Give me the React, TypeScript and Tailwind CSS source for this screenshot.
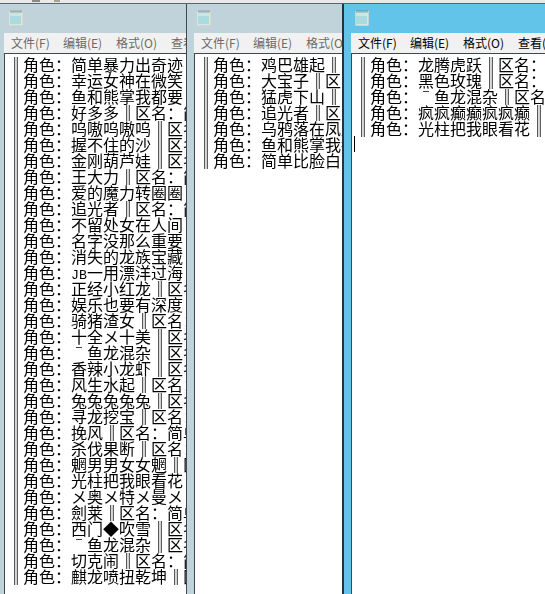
import React from 'react'

const leftRows = [
  '简单暴力出奇迹‖区名：',
  '幸运女神在微笑‖区名：',
  '鱼和熊掌我都要‖区名：',
  '好多多‖区名：简单',
  '呜嗷呜嗷呜‖区名：',
  '握不住的沙‖区名：',
  '金刚葫芦娃‖区名：',
  '王大力‖区名：简单',
  '爱的魔力转圈圈‖区名：',
  '追光者‖区名：简单',
  '不留处女在人间‖区名：',
  '名字没那么重要‖区名：',
  '消失的龙族宝藏‖区名：',
  '@JB一用漂洋过海‖区名：',
  '正经小红龙‖区名：',
  '娱乐也要有深度‖区名：',
  '骑猪渣女‖区名：简单',
  '十全メ十美‖区名：',
  '#鱼龙混杂‖区名：',
  '香辣小龙虾‖区名：',
  '风生水起‖区名：简单',
  '兔兔兔兔兔‖区名：',
  '寻龙挖宝‖区名：简单',
  '挽风‖区名：简单比脸白',
  '杀伐果断‖区名：简单',
  '魍男男女女魍‖区名：',
  '光柱把我眼看花‖区名：',
  'メ奥メ特メ曼メ‖区名：',
  '劍莱‖区名：简单比脸白',
  '西门◆吹雪‖区名：',
  '#鱼龙混杂‖区名：',
  '切克闹‖区名：简单',
  '麒龙喷扭乾坤‖区名：',
]

const midRows = [
  '鸡巴雄起‖区名：简单',
  '大宝子‖区名：简单',
  '猛虎下山‖区名：简单',
  '追光者‖区名：简单',
  '乌鸦落在凤凰‖区名：',
  '鱼和熊掌我都要‖区名：',
  '简单比脸白‖区名：',
]

const rightRows = [
  '龙腾虎跃‖区名：简单比脸白',
  '黑色玫瑰‖区名：简单比脸白',
  '#鱼龙混杂‖区名：简单比脸白',
  '疯疯癫癫疯疯癫‖区名：简单',
  '光柱把我眼看花‖区名：简单',
]

function NotepadIcon() {
  return (
    <svg width="16" height="17" viewBox="0 0 16 17" className="block">
      <rect x="1.5" y="2" width="13" height="14.5" fill="#f4f2e6" />
      <rect x="2" y="3" width="11" height="12.5" fill="#a9dbe0" />
      <rect x="2" y="3" width="11" height="4" fill="#c8e6e4" />
      <path d="M14 2v14.5H3" fill="none" stroke="#d8d4bc" strokeWidth="1" />
      <path d="M3 1.5v2M5 1.5v2M7 1.5v2M9 1.5v2M11 1.5v2M13 1.5v2" stroke="#5d6f78" strokeWidth="1" />
    </svg>
  )
}

function Bar() {
  return <span className="inline-block w-4 pl-px text-center [-webkit-text-stroke:0.2px_black]">‖</span>
}

function Name({ text }: { text: string }) {
  // 半角字符和特殊符号单独占格，保持等宽对齐
  if (text.startsWith('@JB')) {
    return (
      <>
        <span className="inline-block w-4 font-['Liberation_Mono'] text-[13.3px]">JB</span>
        {text.slice(3)}
      </>
    )
  }
  if (text.startsWith('#')) {
    return (
      <>
        <span className="inline-block w-4 text-center">ˉ</span>
        {text.slice(1)}
      </>
    )
  }
  return <>{text}</>
}

function Row({ text }: { text: string }) {
  const [name, rest] = text.split('‖')
  return (
    <div className="h-4 whitespace-nowrap leading-4">
      <Bar />
      角色：
      <Name text={name} />
      <Bar />
      {rest}
    </div>
  )
}

function Notepad({
  width,
  rows,
  active = false,
  caret = false,
  frame,
  iconPad,
}: {
  width: string
  rows: string[]
  active?: boolean
  caret?: boolean
  frame: string
  iconPad: string
}) {
  const frameColor = active ? 'bg-[#62c4e8]' : 'bg-[#c0d2da]'
  return (
    <div className={`flex h-full shrink-0 flex-col overflow-hidden ${width}`}>
      <div className={`flex h-[29px] shrink-0 items-center pb-0.5 ${iconPad} ${frameColor}`}>
        <NotepadIcon />
      </div>
      <div className={`flex min-h-0 flex-1 ${frameColor}`}>
        <div className={`h-full shrink-0 ${frame}`} />
        <div className="flex min-w-0 flex-1 flex-col">
          <div
            className={`flex h-5 shrink-0 items-center overflow-hidden whitespace-nowrap bg-[#f1f1f1] pl-[7px] text-xs ${
              active ? 'text-black' : 'text-[#6a6a6a]'
            }`}
          >
            <span className="w-[52px] shrink-0">文件(F)</span>
            <span className="w-[53px] shrink-0">编辑(E)</span>
            <span className="w-[55px] shrink-0">格式(O)</span>
            <span className="shrink-0">查看(V)</span>
          </div>
          <div className="min-h-0 flex-1 overflow-hidden border-t border-l border-[#3b4a52] bg-white pl-0.5 pt-0.5">
            <div className="text-base text-black will-change-transform">
              {rows.map((r, i) => (
                <Row key={i} text={r} />
              ))}
              {caret && <div className="h-4 w-px bg-black" />}
            </div>
          </div>
        </div>
      </div>
    </div>
  )
}

export default function App() {
  return (
    <div className="flex h-[594px] w-[545px] flex-col overflow-hidden bg-[#c0d2da] font-['Noto_Sans_CJK_SC',sans-serif]">
      <div className="flex h-[3px] shrink-0 items-start bg-[#e9e9e9] pl-8">
        <div className="h-0.5 w-2 bg-[#8a8a80]" />
        <div className="ml-3.5 h-0.5 w-1.5 bg-[#a8a28c]" />
      </div>
      <div className="h-px shrink-0 bg-[#55666e]" />
      <div className="flex min-h-0 flex-1">
        <Notepad width="w-[186px]" frame="w-[4px]" iconPad="pl-[8px]" rows={leftRows} />
        <div className="w-px shrink-0 bg-[#3b4a52]" />
        <Notepad width="w-[155px]" frame="w-[7px]" iconPad="pl-[9px]" rows={midRows} />
        <div className="w-0.5 shrink-0 bg-[#24333c]" />
        <Notepad width="w-[201px]" frame="w-[7px]" iconPad="pl-[10px]" rows={rightRows} active caret />
      </div>
    </div>
  )
}
